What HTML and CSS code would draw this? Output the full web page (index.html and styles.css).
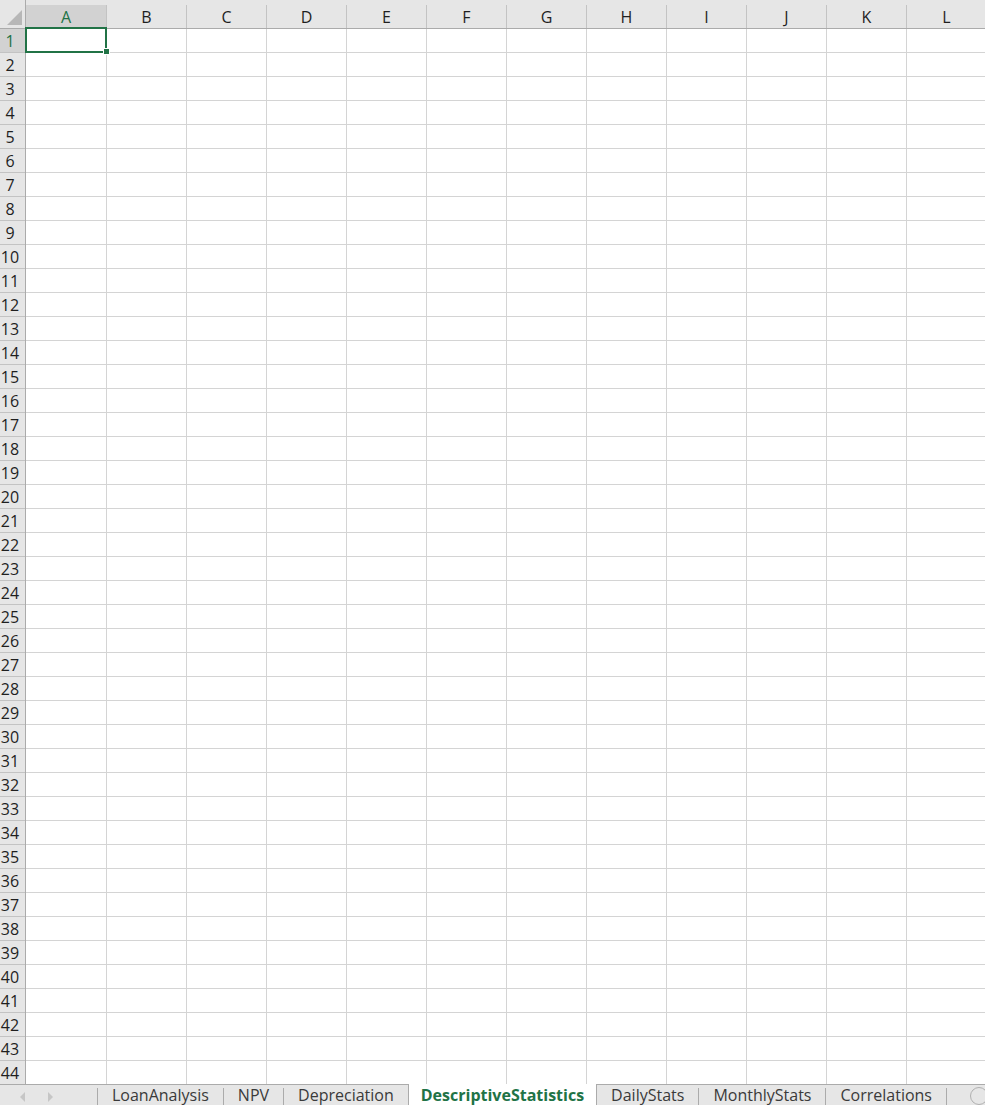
FILE: index.html
```html
<!DOCTYPE html>
<html>
<head>
<meta charset="utf-8">
<link rel="stylesheet" href="styles.css">
</head>
<body>
<div class="app">
  <div class="colheads">
    <div class="corner"><svg width="16" height="16" viewBox="0 0 16 16"><polygon points="0,16 15,1 15,16" fill="#b7b7b7"/></svg></div>
    <div class="ch ch-a sel">A</div>
    <div class="ch">B</div>
    <div class="ch">C</div>
    <div class="ch">D</div>
    <div class="ch">E</div>
    <div class="ch">F</div>
    <div class="ch">G</div>
    <div class="ch">H</div>
    <div class="ch">I</div>
    <div class="ch">J</div>
    <div class="ch">K</div>
    <div class="ch">L</div>
  </div>
  <div class="body">
    <div class="rowheads">
      <div class="rh sel">1</div><div class="rh">2</div><div class="rh">3</div><div class="rh">4</div>
      <div class="rh">5</div><div class="rh">6</div><div class="rh">7</div><div class="rh">8</div>
      <div class="rh">9</div><div class="rh">10</div><div class="rh">11</div><div class="rh">12</div>
      <div class="rh">13</div><div class="rh">14</div><div class="rh">15</div><div class="rh">16</div>
      <div class="rh">17</div><div class="rh">18</div><div class="rh">19</div><div class="rh">20</div>
      <div class="rh">21</div><div class="rh">22</div><div class="rh">23</div><div class="rh">24</div>
      <div class="rh">25</div><div class="rh">26</div><div class="rh">27</div><div class="rh">28</div>
      <div class="rh">29</div><div class="rh">30</div><div class="rh">31</div><div class="rh">32</div>
      <div class="rh">33</div><div class="rh">34</div><div class="rh">35</div><div class="rh">36</div>
      <div class="rh">37</div><div class="rh">38</div><div class="rh">39</div><div class="rh">40</div>
      <div class="rh">41</div><div class="rh">42</div><div class="rh">43</div><div class="rh">44</div>
    </div>
    <div class="cells">
      <div class="col col-a"></div>
      <div class="col"></div>
      <div class="col"></div>
      <div class="col"></div>
      <div class="col"></div>
      <div class="col"></div>
      <div class="col"></div>
      <div class="col"></div>
      <div class="col"></div>
      <div class="col"></div>
      <div class="col"></div>
      <div class="col"></div>
    </div>
  </div>
  <div class="selection"></div>
  <div class="handle"></div>
  <div class="tabbar">
    <div class="nav">
      <svg width="6" height="10" viewBox="0 0 6 10"><polygon points="5,0 5,10 0,5" fill="#c6c6c6"/></svg>
      <svg width="6" height="10" viewBox="0 0 6 10"><polygon points="0,0 0,10 5,5" fill="#c6c6c6"/></svg>
    </div>
    <span class="sep"></span>
    <div class="tab">LoanAnalysis</div>
    <span class="sep"></span>
    <div class="tab">NPV</div>
    <span class="sep"></span>
    <div class="tab">Depreciation</div>
    <div class="tab active">DescriptiveStatistics</div>
    <div class="tab">DailyStats</div>
    <span class="sep"></span>
    <div class="tab">MonthlyStats</div>
    <span class="sep"></span>
    <div class="tab">Correlations</div>
    <span class="sep"></span>
    <div class="addbtn"><svg width="20" height="20" viewBox="0 0 20 20"><circle cx="10" cy="10" r="8.5" fill="none" stroke="#b0b0b0" stroke-width="1"/></svg></div>
  </div>
</div>
</body>
</html>
```

FILE: styles.css
```css
html, body {
  margin: 0;
  padding: 0;
}
body {
  width: 985px;
  height: 1105px;
  overflow: hidden;
  background: #ffffff;
  font-family: "Open Sans", "Noto Sans", sans-serif;
}
.app {
  position: relative;
  width: 985px;
  height: 1105px;
  overflow: hidden;
}
.colheads {
  display: flex;
  height: 29px;
  box-sizing: border-box;
  background: #e6e6e6;
  border-bottom: 1px solid #ababab;
  align-items: flex-end;
}
.corner {
  flex: 0 0 26px;
  height: 28px;
  box-sizing: border-box;
  border-right: 1px solid #ababab;
  display: flex;
  align-items: flex-end;
  justify-content: flex-end;
  padding: 0 2px 3px 0;
}
.corner svg {
  display: block;
}
.ch {
  flex: 0 0 80px;
  height: 23px;
  box-sizing: border-box;
  border-right: 1px solid #c3c3c3;
  display: flex;
  align-items: center;
  justify-content: center;
  font-size: 16px;
  color: #1f1f1f;
  line-height: 1;
}
.ch-a {
  flex-basis: 81px;
}
.ch.sel {
  background: #d2d2d2;
  color: #217346;
}
.body {
  display: flex;
  height: 1056px;
}
.rowheads {
  flex: 0 0 26px;
  background: #e6e6e6;
  box-sizing: border-box;
  border-right: 1px solid #ababab;
}
.rh {
  height: 24px;
  box-sizing: border-box;
  border-bottom: 1px solid #c3c3c3;
  display: flex;
  align-items: center;
  justify-content: center;
  padding-right: 5px;
  padding-top: 1px;
  font-size: 16px;
  color: #1f1f1f;
  line-height: 1;
}
.rh.sel {
  background: #d2d2d2;
  color: #217346;
}
.cells {
  display: flex;
  flex: 1;
  background-image: linear-gradient(to bottom, transparent 23px, #d4d4d4 23px);
  background-size: 100% 24px;
}
.col {
  flex: 0 0 80px;
  box-sizing: border-box;
  border-right: 1px solid #d4d4d4;
}
.col-a {
  flex-basis: 81px;
}
.selection {
  position: absolute;
  left: 25px;
  top: 27px;
  width: 82px;
  height: 26px;
  box-sizing: border-box;
  border: 2px solid #217346;
}
.handle {
  position: absolute;
  left: 103px;
  top: 48px;
  width: 7px;
  height: 7px;
  box-sizing: border-box;
  background: #217346;
  border: 1px solid #ffffff;
}
.tabbar {
  display: flex;
  align-items: stretch;
  height: 21px;
  margin-top: -1px;
  box-sizing: border-box;
  background: #e6e6e6;
  border-top: 1px solid #ababab;
  font-size: 16px;
  color: #3a3a3a;
  position: relative;
}
.nav {
  flex: 0 0 97px;
  display: flex;
  align-items: center;
  padding-left: 20px;
  box-sizing: border-box;
  gap: 22px;
  padding-top: 4px;
}
.nav svg {
  display: block;
}
.sep {
  flex: 0 0 1px;
  align-self: flex-end;
  height: 17px;
  background: #ababab;
}
.tab {
  padding: 0 14px;
  display: flex;
  align-items: center;
  line-height: 1;
  white-space: nowrap;
}
.tab.active {
  padding: 0 12px;
  background: #ffffff;
  color: #217346;
  font-weight: 700;
  margin-top: -1px;
  border-left: 1px solid #ababab;
  border-right: 1px solid #ababab;
}
.addbtn {
  margin-left: 22px;
  display: flex;
  align-items: center;
  padding-top: 2px;
}
.addbtn svg {
  display: block;
}
```
